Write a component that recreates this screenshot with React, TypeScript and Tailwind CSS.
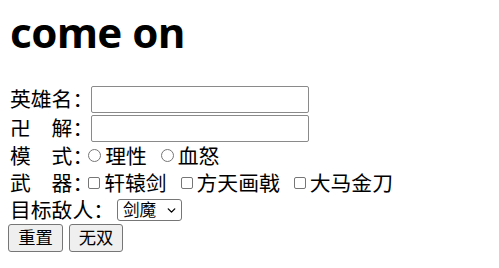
import { ChevronDown } from "lucide-react";

const cjk = "font-['Noto_Sans','Noto_Sans_CJK_SC',sans-serif]";

function Radio({ label }: { label: string }) {
  return (
    <span className="inline-flex items-center whitespace-nowrap">
      <span className="shrink-0 w-[13px] h-[13px] rounded-full border border-[#767676] bg-white mr-[4px]" />
      <span>{label}</span>
    </span>
  );
}

function Check({ label }: { label: string }) {
  return (
    <span className="inline-flex items-center whitespace-nowrap">
      <span className="shrink-0 w-[12px] h-[12px] rounded-[2px] border border-[#767676] bg-white mr-[4px]" />
      <span>{label}</span>
    </span>
  );
}

export default function App() {
  return (
    <div className={`w-[499px] h-[268px] bg-white text-black ${cjk} pl-[10px] overflow-hidden`}>
      <h1 className="font-['Noto_Sans',sans-serif] font-bold text-[42px] leading-none pt-[11px] h-[85px] tracking-[-0.5px]">
        come on
      </h1>
      <div className="text-[20.8px] leading-none whitespace-nowrap">
        <div className="flex items-center h-[29px]">
          <span className="shrink-0 -mr-[2px]">英雄名：</span>
          <span className="shrink-0 w-[218px] h-[27px] border border-[#8a8a8a] rounded-[2px]" />
        </div>
        <div className="flex items-center h-[28px]">
          <span className="shrink-0 -mr-[2px]">卍　解：</span>
          <span className="shrink-0 w-[218px] h-[27px] border border-[#8a8a8a] rounded-[2px]" />
        </div>
        <div className="flex items-center h-[28px]">
          <span className="shrink-0 -mr-[5px]">模　式：</span>
          <span className="flex items-center gap-[14px]">
            <Radio label="理性" />
            <Radio label="血怒" />
          </span>
        </div>
        <div className="flex items-center h-[27px]">
          <span className="shrink-0 -mr-[5px]">武　器：</span>
          <span className="flex items-center gap-[14px]">
            <Check label="轩辕剑" />
            <Check label="方天画戟" />
            <Check label="大马金刀" />
          </span>
        </div>
        <div className="flex items-center h-[26px]">
          <span className="shrink-0 mr-[3px]">目标敌人：</span>
          <span className="shrink-0 flex items-center justify-between w-[65px] h-[22px] border border-[#767676] rounded-[3px] pl-[5px] pr-[3px] text-[16.6px]">
            剑魔
            <ChevronDown size={13} strokeWidth={2.5} />
          </span>
        </div>
        <div className="flex items-center gap-[6px] h-[30px] -ml-[2px]">
          <button className="h-[28px] w-[55px] bg-[#efefef] border border-[#767676] rounded-[3px] text-[17.3px]">重置</button>
          <button className="h-[28px] w-[54px] bg-[#efefef] border border-[#767676] rounded-[3px] text-[17.3px]">无双</button>
        </div>
      </div>
    </div>
  );
}
